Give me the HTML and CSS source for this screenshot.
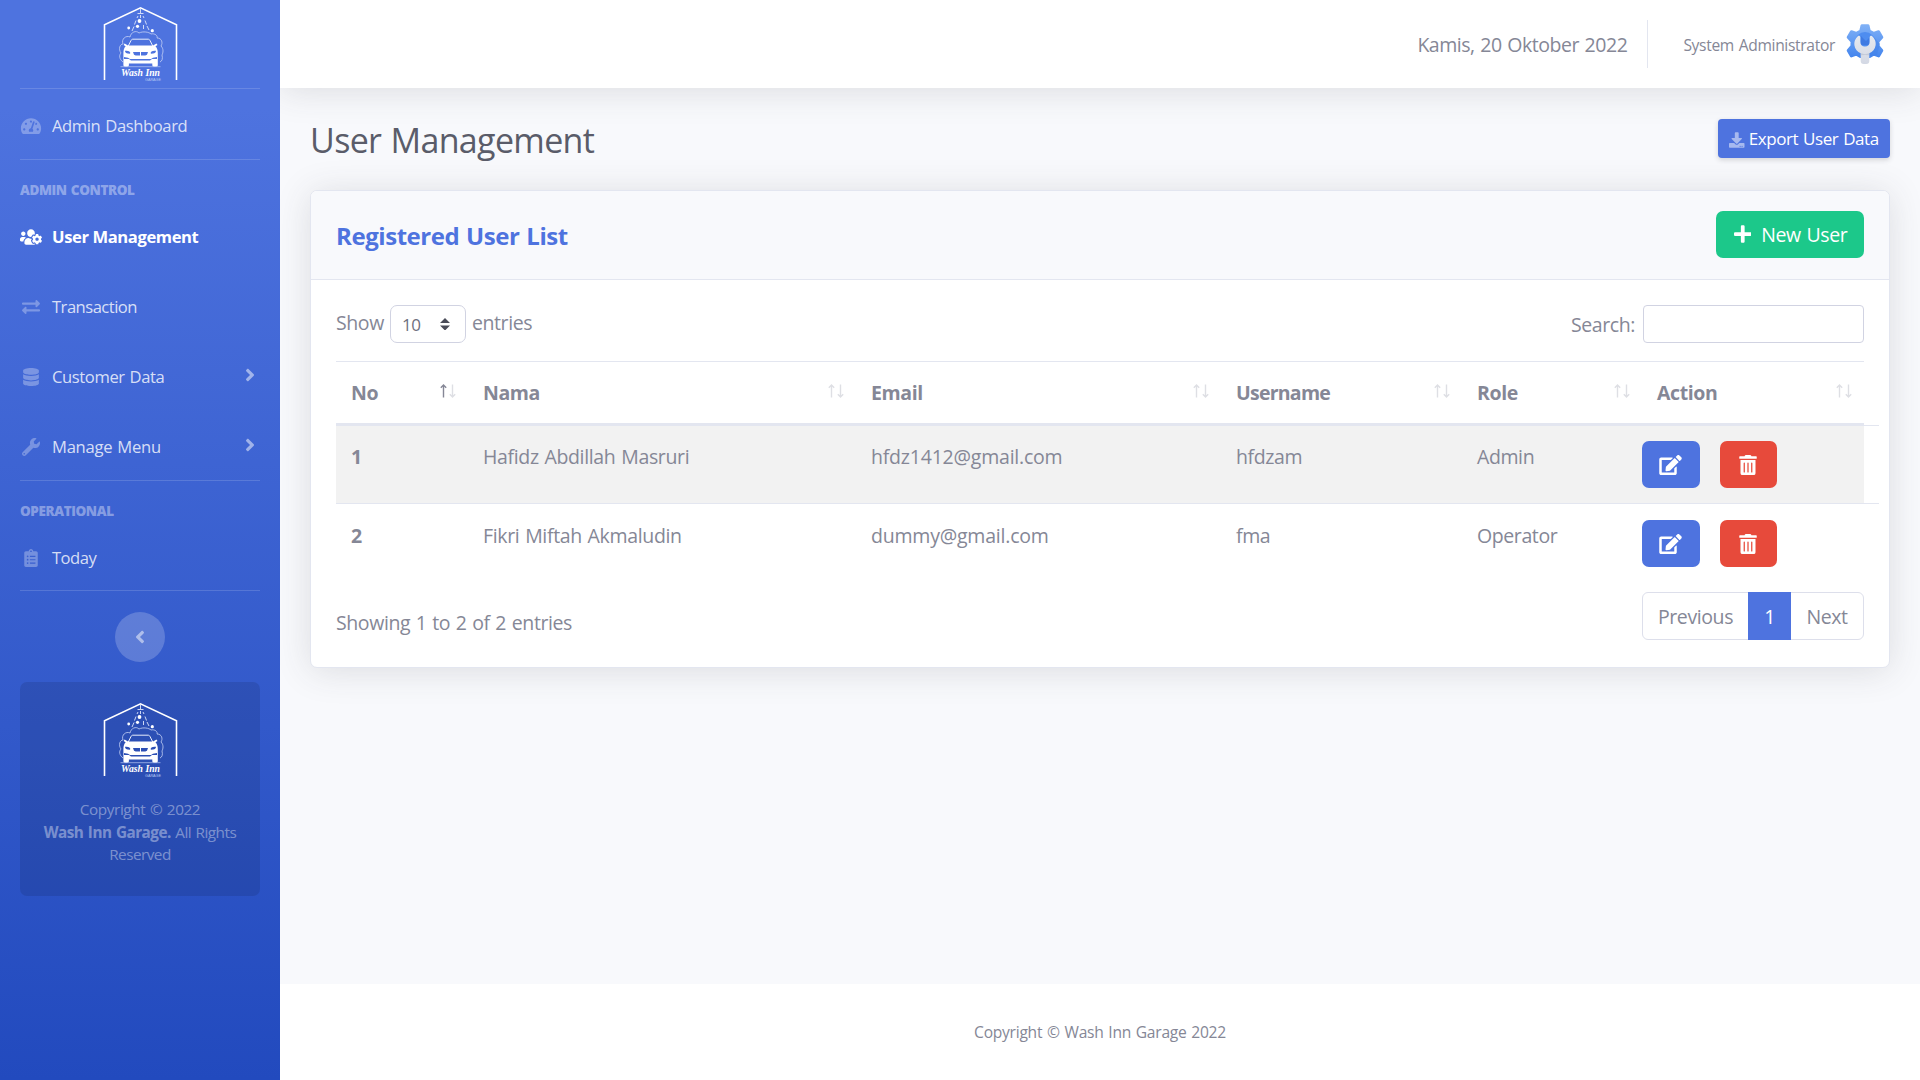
FILE: index.html
```html
<!DOCTYPE html>
<html lang="id">
<head>
<meta charset="utf-8">
<title>User Management</title>
<link rel="stylesheet" href="styles.css">
</head>
<body>
<svg class="defs" aria-hidden="true">
  <defs>
    <linearGradient id="gearBlue" x1="0" y1="0" x2="0" y2="1"><stop offset="0" stop-color="#7fb0f6"/><stop offset="1" stop-color="#4586ee"/></linearGradient>
    <linearGradient id="steel" x1="0" y1="0" x2="0" y2="1"><stop offset="0" stop-color="#e6e9ef"/><stop offset="1" stop-color="#d3d8e4"/></linearGradient>
    <symbol id="logo" viewBox="0 0 80 80">
      <path d="M4.500 78V22.800L40.500 5.800L76.500 22.800V78" fill="none" stroke="#fff" stroke-width="1.600"/>
      <path d="M40.500 6v5M37.500 11.500h6M38 14l-1 2M40.500 13v3M43 14l1 2M36 18.500l-1.500 4M45 18.500l1.500 4M34 24.500l-2 4.500M47 24l2 4M43.500 23v4" stroke="#dfe6fa" stroke-width=".9" fill="none"/>
      <g fill="#fff"><circle cx="39.500" cy="19" r="1.900"/><circle cx="37.500" cy="24.300" r="1.600"/><circle cx="28.700" cy="26" r="1.400"/><circle cx="52.300" cy="28.700" r="1.600"/></g>
      <path d="M23 60c-4-3-4-7-2-9-3-4-1-9 2-9-2-5 3-9 7-7 1-5 6-7 9-4 4-2 10-1 12 1 4-1 7 2 6 4 5 0 6 5 4 8 3 3 2 7 1 9 1 4 0 6-2 7" fill="none" stroke="#c6d2f5" stroke-width=".8"/>
      <path d="M28 44.500l3-6c.5-1 1-1.300 2-1.300h15c1 0 1.500.3 2 1.300l3 6" fill="none" stroke="#e8edfb" stroke-width="1"/>
      <path fill="#fff" fill-rule="evenodd" d="M28 43.500h25l3.500-2 1 1.400-2 1.400c1.800 2 2.300 4 2.300 7V63c0 1-.6 1.700-1.600 1.700H54c-1 0-1.700-.7-1.700-1.700v-1.500H28.900V63c0 1-.7 1.700-1.700 1.700H25c-1 0-1.600-.7-1.600-1.700V51.300c0-3 .4-5 2.200-7l-2-1.400 1-1.400zM25 48.700c0 2 1.300 3 5 3 .8-1.500 0-3-5-3zm31 0c-5 0-5.800 1.500-5 3 3.700 0 5-1 5-3zM33 50l1 2.700 1.700.8H40V50zm8 0v3.500h4.300l1.700-.8 1-2.700zM24 55v2h5l2 1.500h19l2-1.500h5v-2l-4 .7-2 1.300H30l-2-1.300z"/>
      <path d="M20.500 64.700h40" stroke="#b9c8f3" stroke-width=".7"/>
      <text x="21" y="74.200" class="logo-name" textLength="39" lengthAdjust="spacingAndGlyphs">Wash Inn</text>
      <text x="45" y="79.200" class="logo-sub" textLength="16" lengthAdjust="spacingAndGlyphs">GARAGE</text>
    </symbol>
    <symbol id="edit" viewBox="0 0 576 512"><path d="M402.600 83.200l90.200 90.200c3.800 3.800 3.800 10 0 13.800L274.400 405.600l-92.800 10.300c-12.400 1.400-22.900-9.100-21.500-21.500l10.300-92.800L388.800 83.200c3.800-3.800 10-3.800 13.800 0zm162-22.900l-48.800-48.800c-15.200-15.200-39.900-15.200-55.200 0l-35.400 35.400c-3.800 3.800-3.800 10 0 13.800l90.200 90.200c3.800 3.800 10 3.800 13.800 0l35.400-35.400c15.200-15.300 15.200-40 0-55.200zM384 346.200V448H64V128h229.800c3.200 0 6.200-1.300 8.500-3.500l40-40c7.600-7.600 2.200-20.500-8.500-20.500H48C21.500 64 0 85.500 0 112v352c0 26.500 21.500 48 48 48h352c26.500 0 48-21.500 48-48V306.200c0-10.700-12.900-16-20.500-8.500l-40 40c-2.200 2.300-3.500 5.300-3.500 8.500z"/></symbol>
    <symbol id="trash" viewBox="0 0 448 512"><path d="M32 464a48 48 0 0 0 48 48h288a48 48 0 0 0 48-48V128H32zm272-256a16 16 0 0 1 32 0v224a16 16 0 0 1-32 0zm-96 0a16 16 0 0 1 32 0v224a16 16 0 0 1-32 0zm-96 0a16 16 0 0 1 32 0v224a16 16 0 0 1-32 0zM432 32H312l-9.400-18.700A24 24 0 0 0 281.100 0H166.800a23.720 23.720 0 0 0-21.400 13.300L136 32H16A16 16 0 0 0 0 48v32a16 16 0 0 0 16 16h416a16 16 0 0 0 16-16V48a16 16 0 0 0-16-16z"/></symbol>
    <symbol id="angle" viewBox="0 0 256 512"><path d="M224.300 273l-136 136c-9.400 9.400-24.600 9.400-33.900 0l-22.600-22.600c-9.400-9.400-9.400-24.600 0-33.900l96.400-96.400-96.400-96.400c-9.400-9.400-9.400-24.600 0-33.900L54.300 103c9.400-9.400 24.600-9.400 33.900 0l136 136c9.500 9.400 9.500 24.600.1 34z"/></symbol>
    <symbol id="sort-up" viewBox="0 0 9 14"><path d="M4.500 13.500V1.200M1.800 3.700L4.500 1l2.700 2.700"/></symbol>
    <symbol id="sort-down" viewBox="0 0 9 14"><path d="M4.500 .5v12.300M1.800 10.300L4.500 13l2.700-2.700"/></symbol>
  </defs>
</svg>

<div class="wrapper">
  <nav class="sidebar">
    <a class="brand"><svg class="logo"><use href="#logo"/></svg></a>
    <hr>
    <a class="nav-item first"><svg class="ico" viewBox="0 0 576 512"><path d="M288 32C128.940 32 0 160.940 0 320c0 52.800 14.250 102.260 39.060 144.800 5.610 9.620 16.300 15.200 27.440 15.200h443c11.140 0 21.830-5.580 27.440-15.200C561.750 422.260 576 372.800 576 320c0-159.060-128.940-288-288-288zm0 64c14.710 0 26.580 10.130 30.320 23.650-1.110 2.260-2.640 4.230-3.450 6.670l-9.220 27.670c-5.130 3.490-10.970 6.010-17.640 6.010-17.670 0-32-14.330-32-32S270.330 96 288 96zM96 384c-17.670 0-32-14.330-32-32s14.330-32 32-32 32 14.330 32 32-14.330 32-32 32zm48-160c-17.670 0-32-14.330-32-32s14.330-32 32-32 32 14.330 32 32-14.330 32-32 32zm246.770-72.410l-61.330 184C343.130 347.330 352 364.540 352 384c0 11.720-3.380 22.550-8.880 32H232.880c-5.500-9.450-8.880-20.280-8.880-32 0-33.940 26.500-61.430 59.900-63.590l61.340-184.010c4.170-12.560 17.730-19.450 30.360-15.170 12.570 4.190 19.350 17.790 15.170 30.360zm14.660 57.200l15.520-46.550c3.470-1.290 7.130-2.230 11.050-2.230 17.670 0 32 14.330 32 32s-14.330 32-32 32c-11.380-.01-20.890-6.280-26.570-15.220zM480 384c-17.670 0-32-14.330-32-32s14.330-32 32-32 32 14.330 32 32-14.330 32-32 32z"/></svg><span>Admin Dashboard</span></a>
    <hr>
    <div class="heading">ADMIN CONTROL</div>
    <a class="nav-item active"><svg class="ico" viewBox="0 0 640 512"><path d="M610.500 341.300c2.600-14.100 2.600-28.500 0-42.600l25.800-14.900c3-1.700 4.300-5.200 3.300-8.500-6.700-21.600-18.200-41.200-33.200-57.400-2.300-2.500-6-3.100-9-1.400l-25.800 14.900c-10.900-9.300-23.400-16.500-36.900-21.300v-29.800c0-3.400-2.400-6.400-5.700-7.100-22.300-5-45-4.800-66.200 0-3.300.7-5.700 3.700-5.700 7.100v29.800c-13.500 4.800-26 12-36.900 21.300l-25.800-14.900c-2.900-1.700-6.700-1.100-9 1.400-15 16.200-26.500 35.800-33.200 57.400-1 3.300.4 6.800 3.300 8.500l25.800 14.900c-2.600 14.100-2.600 28.500 0 42.600l-25.800 14.900c-3 1.700-4.300 5.200-3.300 8.500 6.700 21.600 18.200 41.100 33.200 57.400 2.300 2.500 6 3.100 9 1.400l25.800-14.900c10.900 9.300 23.400 16.500 36.900 21.300v29.800c0 3.400 2.400 6.400 5.700 7.100 22.300 5 45 4.800 66.200 0 3.300-.7 5.700-3.700 5.700-7.100v-29.800c13.500-4.800 26-12 36.900-21.300l25.800 14.900c2.900 1.700 6.700 1.100 9-1.400 15-16.200 26.500-35.800 33.200-57.400 1-3.300-.4-6.800-3.300-8.500l-25.800-14.900zM496 368.500c-26.800 0-48.500-21.800-48.500-48.500s21.800-48.500 48.500-48.500 48.500 21.800 48.500 48.500-21.700 48.500-48.500 48.500zM96 224c35.300 0 64-28.700 64-64s-28.700-64-64-64-64 28.700-64 64 28.700 64 64 64zm224 32c1.900 0 3.700-.5 5.600-.6 8.300-21.700 20.500-42.100 36.300-59.200 7.400-8 17.900-12.600 28.900-12.600 6.900 0 13.700 1.800 19.600 5.300l7.900 4.600c.8-.5 1.600-.9 2.400-1.400 7-14.600 11.200-30.800 11.200-48 0-61.900-50.100-112-112-112S208 82.100 208 144c0 61.900 50.100 112 112 112zm105.200 194.500c-2.300-1.200-4.600-2.600-6.800-3.900-8.200 4.800-15.300 9.800-27.500 9.800-10.900 0-21.400-4.600-28.900-12.600-18.300-19.800-32.300-43.900-40.200-69.600-10.700-34.500 24.900-49.700 25.800-50.300-.1-2.600-.1-5.200 0-7.800l-7.900-4.600c-3.800-2.200-7-5-9.800-8.100-3.300.2-6.500.6-9.800.6-24.600 0-47.600-6-68.500-16h-8.300C179.600 288 128 339.600 128 403.200V432c0 26.500 21.500 48 48 48h255.400c-3.700-6-6.200-12.800-6.200-20.300v-9.200zM173.100 274.600C161.500 263.100 145.600 256 128 256H64c-35.300 0-64 28.700-64 64v32c0 17.700 14.300 32 32 32h65.900c6.300-47.400 34.900-87.300 75.200-109.400z"/></svg><span>User Management</span></a>
    <a class="nav-item"><svg class="ico" viewBox="-32 0 576 512"><path d="M0 168v-16c0-13.255 10.745-24 24-24h360V80c0-21.367 25.899-32.042 40.971-16.971l80 80c9.372 9.373 9.372 24.569 0 33.941l-80 80C409.956 271.982 384 261.456 384 240v-48H24c-13.255 0-24-10.745-24-24zm488 152H128v-48c0-21.314-25.862-32.080-40.971-16.971l-80 80c-9.372 9.373-9.372 24.569 0 33.941l80 80C102.057 463.997 128 453.437 128 432v-48h360c13.255 0 24-10.745 24-24v-16c0-13.255-10.745-24-24-24z"/></svg><span class="tight">Transaction</span></a>
    <a class="nav-item"><svg class="ico" viewBox="-64 0 576 512"><path d="M448 73.143v45.714C448 159.143 347.667 192 224 192S0 159.143 0 118.857V73.143C0 32.857 100.333 0 224 0s224 32.857 224 73.143zM448 176v102.857C448 319.143 347.667 352 224 352S0 319.143 0 278.857V176c48.125 33.143 136.208 48.572 224 48.572S399.874 209.143 448 176zm0 160v102.857C448 479.143 347.667 512 224 512S0 479.143 0 438.857V336c48.125 33.143 136.208 48.572 224 48.572S399.874 369.143 448 336z"/></svg><span>Customer Data</span><svg class="caret"><use href="#angle"/></svg></a>
    <a class="nav-item"><svg class="ico" viewBox="-32 0 576 512"><path d="M507.730 109.100c-2.240-9.030-13.540-12.090-20.120-5.510l-74.360 74.360-67.880-11.310-11.310-67.880 74.360-74.360c6.620-6.620 3.430-17.900-5.660-20.160-47.380-11.740-99.550.91-136.580 37.930-39.640 39.640-50.550 97.100-34.050 147.200L18.740 402.760c-24.990 24.990-24.990 65.510 0 90.500 24.990 24.990 65.510 24.990 90.500 0l213.210-213.210c50.120 16.710 107.470 5.680 147.370-34.220 37.070-37.070 49.700-89.320 37.910-136.730zM64 472c-13.250 0-24-10.750-24-24 0-13.260 10.750-24 24-24s24 10.740 24 24c0 13.250-10.750 24-24 24z"/></svg><span class="loose">Manage Menu</span><svg class="caret"><use href="#angle"/></svg></a>
    <hr class="pull">
    <div class="heading">OPERATIONAL</div>
    <a class="nav-item last"><svg class="ico" viewBox="-96 0 576 512"><path fill-rule="evenodd" d="M336 64h-80c0-35.300-28.700-64-64-64s-64 28.700-64 64H48C21.500 64 0 85.500 0 112v352c0 26.500 21.500 48 48 48h288c26.500 0 48-21.500 48-48V112c0-26.500-21.500-48-48-48zM96 424a24 24 0 1 1 0-48 24 24 0 0 1 0 48zm0-96a24 24 0 1 1 0-48 24 24 0 0 1 0 48zm0-96a24 24 0 1 1 0-48 24 24 0 0 1 0 48zm96-192a24 24 0 1 1 0 48 24 24 0 0 1 0-48zm128 368c0 4.400-3.600 8-8 8H168c-4.400 0-8-3.600-8-8v-16c0-4.400 3.600-8 8-8h144c4.400 0 8 3.600 8 8zm0-96c0 4.400-3.600 8-8 8H168c-4.400 0-8-3.600-8-8v-16c0-4.400 3.600-8 8-8h144c4.400 0 8 3.600 8 8zm0-96c0 4.400-3.600 8-8 8H168c-4.400 0-8-3.600-8-8v-16c0-4.400 3.600-8 8-8h144c4.400 0 8 3.600 8 8z"/></svg><span class="tight">Today</span></a>
    <hr class="pull">
    <button class="toggle"><svg class="caret flip"><use href="#angle"/></svg></button>
    <div class="side-card">
      <svg class="logo"><use href="#logo"/></svg>
      <p>Copyright © 2022<br><span class="tight"><strong>Wash Inn Garage.</strong> All Rights</span><br><span class="tight">Reserved</span></p>
    </div>
  </nav>

  <div class="content">
    <header class="topbar">
      <span class="date">Kamis, 20 Oktober 2022</span>
      <span class="vline"></span>
      <span class="user">System Administrator</span>
      <svg class="avatar" viewBox="0 0 40 40">
        <path fill="url(#gearBlue)" stroke="url(#gearBlue)" stroke-width="3" stroke-linejoin="round" d="M17 1.700h6l1.300 5.300 4.300 2.400 5-1.700 3.200 5.500-3.800 4.300v4.600l3.800 4.300-3.200 5.500-5-1.700-4.300 2.400h-8.600l-4.300-2.400-5 1.700-3.200-5.500L7 22.100v-4.600l-3.800-4.300 3.200-5.500 5 1.700L15.700 7z"/>
        <path fill="#3f7fe6" opacity=".45" d="M28 12l7 8-3 11-8 1-1-4z"/>
        <circle cx="20" cy="18" r="10" fill="#4e8df0"/>
        <path fill="#3a74dc" opacity=".7" d="M16 12l5 5 3-3v7h-8z"/>
        <path fill="url(#steel)" d="M13 12a10.200 10.200 0 0 0 2.700 17.300V37a3 3 0 0 0 3 3h2.600a3 3 0 0 0 3-3v-7.700A10.200 10.200 0 0 0 27 12c-1-.8-2.300 0-2.300 1.200V18c0 2.700-1.700 4.600-4.700 4.600S15.300 20.700 15.300 18v-4.800c0-1.200-1.300-2-2.300-1.200z"/>
        <path fill="#b4bccd" opacity=".6" d="M15.700 29.300l4.300 1 4.300-1v2l-4.300-.3-4.300.3z"/>
      </svg>
    </header>

    <main>
      <div class="title-row">
        <h1>User Management</h1>
        <button class="btn export"><svg viewBox="0 0 512 512"><path d="M216 0h80c13.300 0 24 10.700 24 24v168h87.700c17.800 0 26.700 21.500 14.100 34.100L269.700 378.300c-7.500 7.500-19.800 7.500-27.300 0L90.100 226.100c-12.600-12.600-3.700-34.100 14.100-34.100H192V24c0-13.300 10.700-24 24-24zm296 376v112c0 13.300-10.700 24-24 24H24c-13.300 0-24-10.700-24-24V376c0-13.300 10.700-24 24-24h146.700l49 49c20.100 20.100 52.500 20.100 72.600 0l49-49H488c13.300 0 24 10.700 24 24zm-124 88c0-11-9-20-20-20s-20 9-20 20 9 20 20 20 20-9 20-20zm64 0c0-11-9-20-20-20s-20 9-20 20 9 20 20 20 20-9 20-20z"/></svg><span>Export User Data</span></button>
      </div>

      <section class="card">
        <div class="card-header">
          <h2>Registered User List</h2>
          <button class="btn new"><svg viewBox="0 0 448 512"><path d="M416 208H272V64c0-17.670-14.330-32-32-32h-32c-17.670 0-32 14.330-32 32v144H32c-17.670 0-32 14.330-32 32v32c0 17.670 14.330 32 32 32h144v144c0 17.670 14.330 32 32 32h32c17.670 0 32-14.330 32-32V304h144c17.670 0 32-14.330 32-32v-32c0-17.670-14.330-32-32-32z"/></svg><span>New User</span></button>
        </div>
        <div class="card-body">
          <div class="controls">
            <div class="length"><span>Show</span><span class="select"><span>10</span><svg viewBox="0 0 4 5"><path d="M2 0L0 2h4zM2 5L0 3h4z"/></svg></span><span>entries</span></div>
            <div class="search"><span>Search:</span><input type="text" aria-label="Search"></div>
          </div>
          <table>
            <colgroup><col class="c1"><col class="c2"><col class="c3"><col class="c4"><col class="c5"><col class="c6"></colgroup>
            <thead>
              <tr>
                <th><div class="th"><span>No</span><span class="sort asc"><svg><use href="#sort-up"/></svg><svg><use href="#sort-down"/></svg></span></div></th>
                <th><div class="th"><span>Nama</span><span class="sort"><svg><use href="#sort-up"/></svg><svg><use href="#sort-down"/></svg></span></div></th>
                <th><div class="th"><span>Email</span><span class="sort"><svg><use href="#sort-up"/></svg><svg><use href="#sort-down"/></svg></span></div></th>
                <th><div class="th"><span class="tighter">Username</span><span class="sort"><svg><use href="#sort-up"/></svg><svg><use href="#sort-down"/></svg></span></div></th>
                <th><div class="th"><span>Role</span><span class="sort"><svg><use href="#sort-up"/></svg><svg><use href="#sort-down"/></svg></span></div></th>
                <th><div class="th"><span>Action</span><span class="sort"><svg><use href="#sort-up"/></svg><svg><use href="#sort-down"/></svg></span></div></th>
              </tr>
            </thead>
            <tbody>
              <tr class="odd">
                <td><b>1</b></td><td class="name">Hafidz Abdillah Masruri</td><td class="mail">hfdz1412@gmail.com</td><td>hfdzam</td><td>Admin</td>
                <td class="act"><div class="actions"><button class="btn edit"><svg><use href="#edit"/></svg></button><button class="btn del"><svg><use href="#trash"/></svg></button></div></td>
              </tr>
              <tr class="even">
                <td><b>2</b></td><td class="name">Fikri Miftah Akmaludin</td><td class="mail">dummy@gmail.com</td><td>fma</td><td>Operator</td>
                <td class="act"><div class="actions"><button class="btn edit"><svg><use href="#edit"/></svg></button><button class="btn del"><svg><use href="#trash"/></svg></button></div></td>
              </tr>
            </tbody>
          </table>
          <div class="table-foot">
            <span class="info">Showing 1 to 2 of 2 entries</span>
            <div class="pager"><a class="prev">Previous</a><a class="cur">1</a><a class="next">Next</a></div>
          </div>
        </div>
      </section>
    </main>

    <footer><span>Copyright © Wash Inn Garage 2022</span></footer>
  </div>
</div>
</body>
</html>
```
FILE: styles.css
```css
* { box-sizing: border-box; }
body { margin: 0; background: #f8f9fc; color: #858796; font: 19.5px/30px "Open Sans", "Noto Sans", sans-serif; letter-spacing: -0.4px; word-spacing: 1px; overflow: hidden; }
button { font: inherit; letter-spacing: inherit; word-spacing: inherit; border: 0; padding: 0; margin: 0; }
h1, h2, p { margin: 0; }
.defs { position: absolute; width: 0; height: 0; }
.wrapper { display: flex; height: 1080px; }
.tight { letter-spacing: -0.520px; }
.tighter { letter-spacing: -0.750px; }
.loose { letter-spacing: -0.270px; }

/* sidebar */
.sidebar { position: relative; z-index: 1; width: 280px; flex: none; display: flex; flex-direction: column; background: linear-gradient(180deg, #4e73df 10%, #224abe 100%); color: rgba(255,255,255,.8); font-size: 16.600px; }
.brand { height: 88px; display: flex; justify-content: center; }
.logo { width: 80px; height: 80px; flex: none; }
.brand .logo { margin-top: 2px; }
.logo-name { font: italic bold 10.500px "Liberation Serif", serif; fill: #fff; letter-spacing: 0; word-spacing: 0; }
.logo-sub { font: 3.800px "Liberation Sans", sans-serif; fill: #b9c8f3; letter-spacing: 0; }
.sidebar hr { width: 240px; height: 1px; margin: 0 20px; border: 0; background: rgba(255,255,255,.15); flex: none; }
.nav-item { height: 70px; padding: 0 25px 0 20px; display: flex; align-items: center; }
.first { padding-top: 4px; }
.ico { width: 22px; height: 18px; fill: rgba(255,255,255,.3); margin-right: 10px; flex: none; }
.nav-item .caret { margin-left: auto; margin-top: -5px; }
.caret { width: 10px; height: 20px; fill: rgba(255,255,255,.5); }
.active { color: #fff; font-weight: 700; word-spacing: 0; }
.active .ico { fill: #fff; }
.heading { height: 42px; padding: 10px 20px 0; font-size: 13.500px; font-weight: 800; line-height: 40px; color: rgba(255,255,255,.4); }
.sidebar hr.pull { margin-top: -2px; }
.last { height: 69px; }
.flip { transform: scaleX(-1); }
.toggle { width: 50px; height: 50px; border-radius: 50%; background: rgba(255,255,255,.2); align-self: center; margin: 21px 0 20px; display: flex; align-items: center; justify-content: center; flex: none; }
.toggle .caret { margin-right: 1px; margin-bottom: 1px; }
.side-card { margin: 0 20px; height: 214px; border-radius: 7px; background: rgba(0,0,0,.1); display: flex; flex-direction: column; align-items: center; padding-top: 16px; font-size: 15.300px; color: rgba(255,255,255,.4); text-align: center; }
.side-card p { line-height: 22.500px; margin-top: 20px; white-space: nowrap; }

/* top bar */
.content { flex: 1; min-width: 0; display: flex; flex-direction: column; }
.topbar { height: 88px; flex: none; background: #fff; box-shadow: 0 3px 35px rgba(58,59,69,.15); display: flex; align-items: center; justify-content: flex-end; padding-right: 35px; }
.date { padding-top: 2px; letter-spacing: -0.460px; }
.vline { width: 1px; height: 48px; background: #e3e6f0; margin: 0 35px 0 20px; }
.user { font-size: 15.600px; letter-spacing: -0.330px; padding-top: 1px; }
.avatar { width: 40px; height: 40px; margin-left: 10px; }

/* page */
main { flex: 1; padding: 0 30px; }
.title-row { display: flex; justify-content: space-between; padding-top: 31px; height: 102px; }
h1 { font-size: 34px; font-weight: 400; line-height: 42px; color: #5a5c69; letter-spacing: -0.660px; }
.btn { display: flex; align-items: center; justify-content: center; color: #fff; border-radius: 7px; }
.btn svg { fill: currentColor; }
.export { width: 172px; height: 39px; border-radius: 4px; background: #4e73df; font-size: 17px; letter-spacing: -0.450px; box-shadow: 0 2px 5px rgba(58,59,69,.2); gap: 4px; }
.export svg { width: 15.500px; height: 16px; opacity: .5; margin-top: 2px; }
.card { background: #fff; border: 1px solid #e3e6f0; border-radius: 7px; box-shadow: 0 3px 35px rgba(58,59,69,.15); height: 478px; }
.card-header { height: 89px; background: #f8f9fc; border-bottom: 1px solid #e3e6f0; border-radius: 6px 6px 0 0; padding: 0 25px; display: flex; align-items: center; justify-content: space-between; }
h2 { font-size: 24px; font-weight: 700; color: #4e73df; padding-top: 1px; letter-spacing: -0.440px; }
.new { width: 148px; height: 47px; background: #1cc88a; gap: 10px; margin-bottom: 2px; padding-left: 1px; }
.new svg { width: 17.500px; height: 20px; }
.new span { padding-top: 2px; }
.card-body { padding: 25px 25px 0; }
.controls { display: flex; justify-content: space-between; height: 56px; }
.length, .search { display: flex; height: 38px; }
.length > span { line-height: 35px; }
.select { width: 76px; height: 38px; border: 1px solid #d1d3e2; border-radius: 7px; margin: 0 6px; padding: 0 15px 0 11px; display: flex; align-items: center; justify-content: space-between; font-size: 17px; color: #6e707e; }
.select span { padding-top: 1px; }
.select svg { width: 10px; height: 12.500px; fill: #4a4c58; }
.search span { line-height: 40px; }
.search input { width: 221px; height: 38px; border: 1px solid #d1d3e2; border-radius: 4px; margin-left: 8px; background: #fff; }

table { width: 1528px; table-layout: fixed; border-collapse: separate; border-spacing: 0; }
.c1 { width: 132px; } .c2 { width: 388px; } .c3 { width: 365px; } .c4 { width: 241px; } .c5 { width: 180px; } .c6 { width: 222px; }
th { height: 64px; padding: 0 11px 0 15px; border-top: 1px solid #e3e6f0; border-bottom: 2px solid #e3e6f0; text-align: left; font-weight: 700; }
.th { display: flex; justify-content: space-between; align-items: center; }
.sort { display: flex; margin-top: -4px; stroke: #dedfe4; }
.sort svg { width: 9px; height: 14px; fill: none; stroke-width: 1.400; }
.asc svg:first-child { stroke: #858796; }
td { height: 78px; padding: 16px 15px 0; vertical-align: top; border-top: 1px solid #e3e6f0; white-space: nowrap; }
.odd td { background: #f2f2f2; }
.name { letter-spacing: -0.340px; }
.mail { letter-spacing: -0.210px; }
td.act { padding: 0; border-top: 0; }
.actions { display: flex; gap: 20px; width: 237px; height: 78px; padding-top: 15px; border-top: 1px solid #e3e6f0; }
.even td { height: 79px; padding-top: 17px; }
.even td.act { padding-top: 0; }
.even .actions { padding-top: 16px; }
.edit { width: 58px; height: 47px; background: #4e73df; }
.del { width: 57px; height: 47px; background: #e74a3b; padding-right: 1px; }
.edit svg { width: 23px; height: 20px; margin-right: 1px; }
.del svg { width: 18px; height: 20px; }
.table-foot { display: flex; justify-content: space-between; padding-top: 10px; }
.info { line-height: 62px; }
.pager { display: flex; height: 48px; border: 1px solid #dddfeb; border-radius: 6px; width: 222px; }
.pager a { display: flex; align-items: center; justify-content: center; padding-top: 2px; }
.prev { width: 105px; }
.cur { width: 43px; margin: -1px 0; background: #4e73df; color: #fff; }
.next { flex: 1; }
footer { height: 96px; flex: none; background: #fff; display: flex; align-items: center; justify-content: center; font-size: 15.600px; letter-spacing: -0.260px; }
```
